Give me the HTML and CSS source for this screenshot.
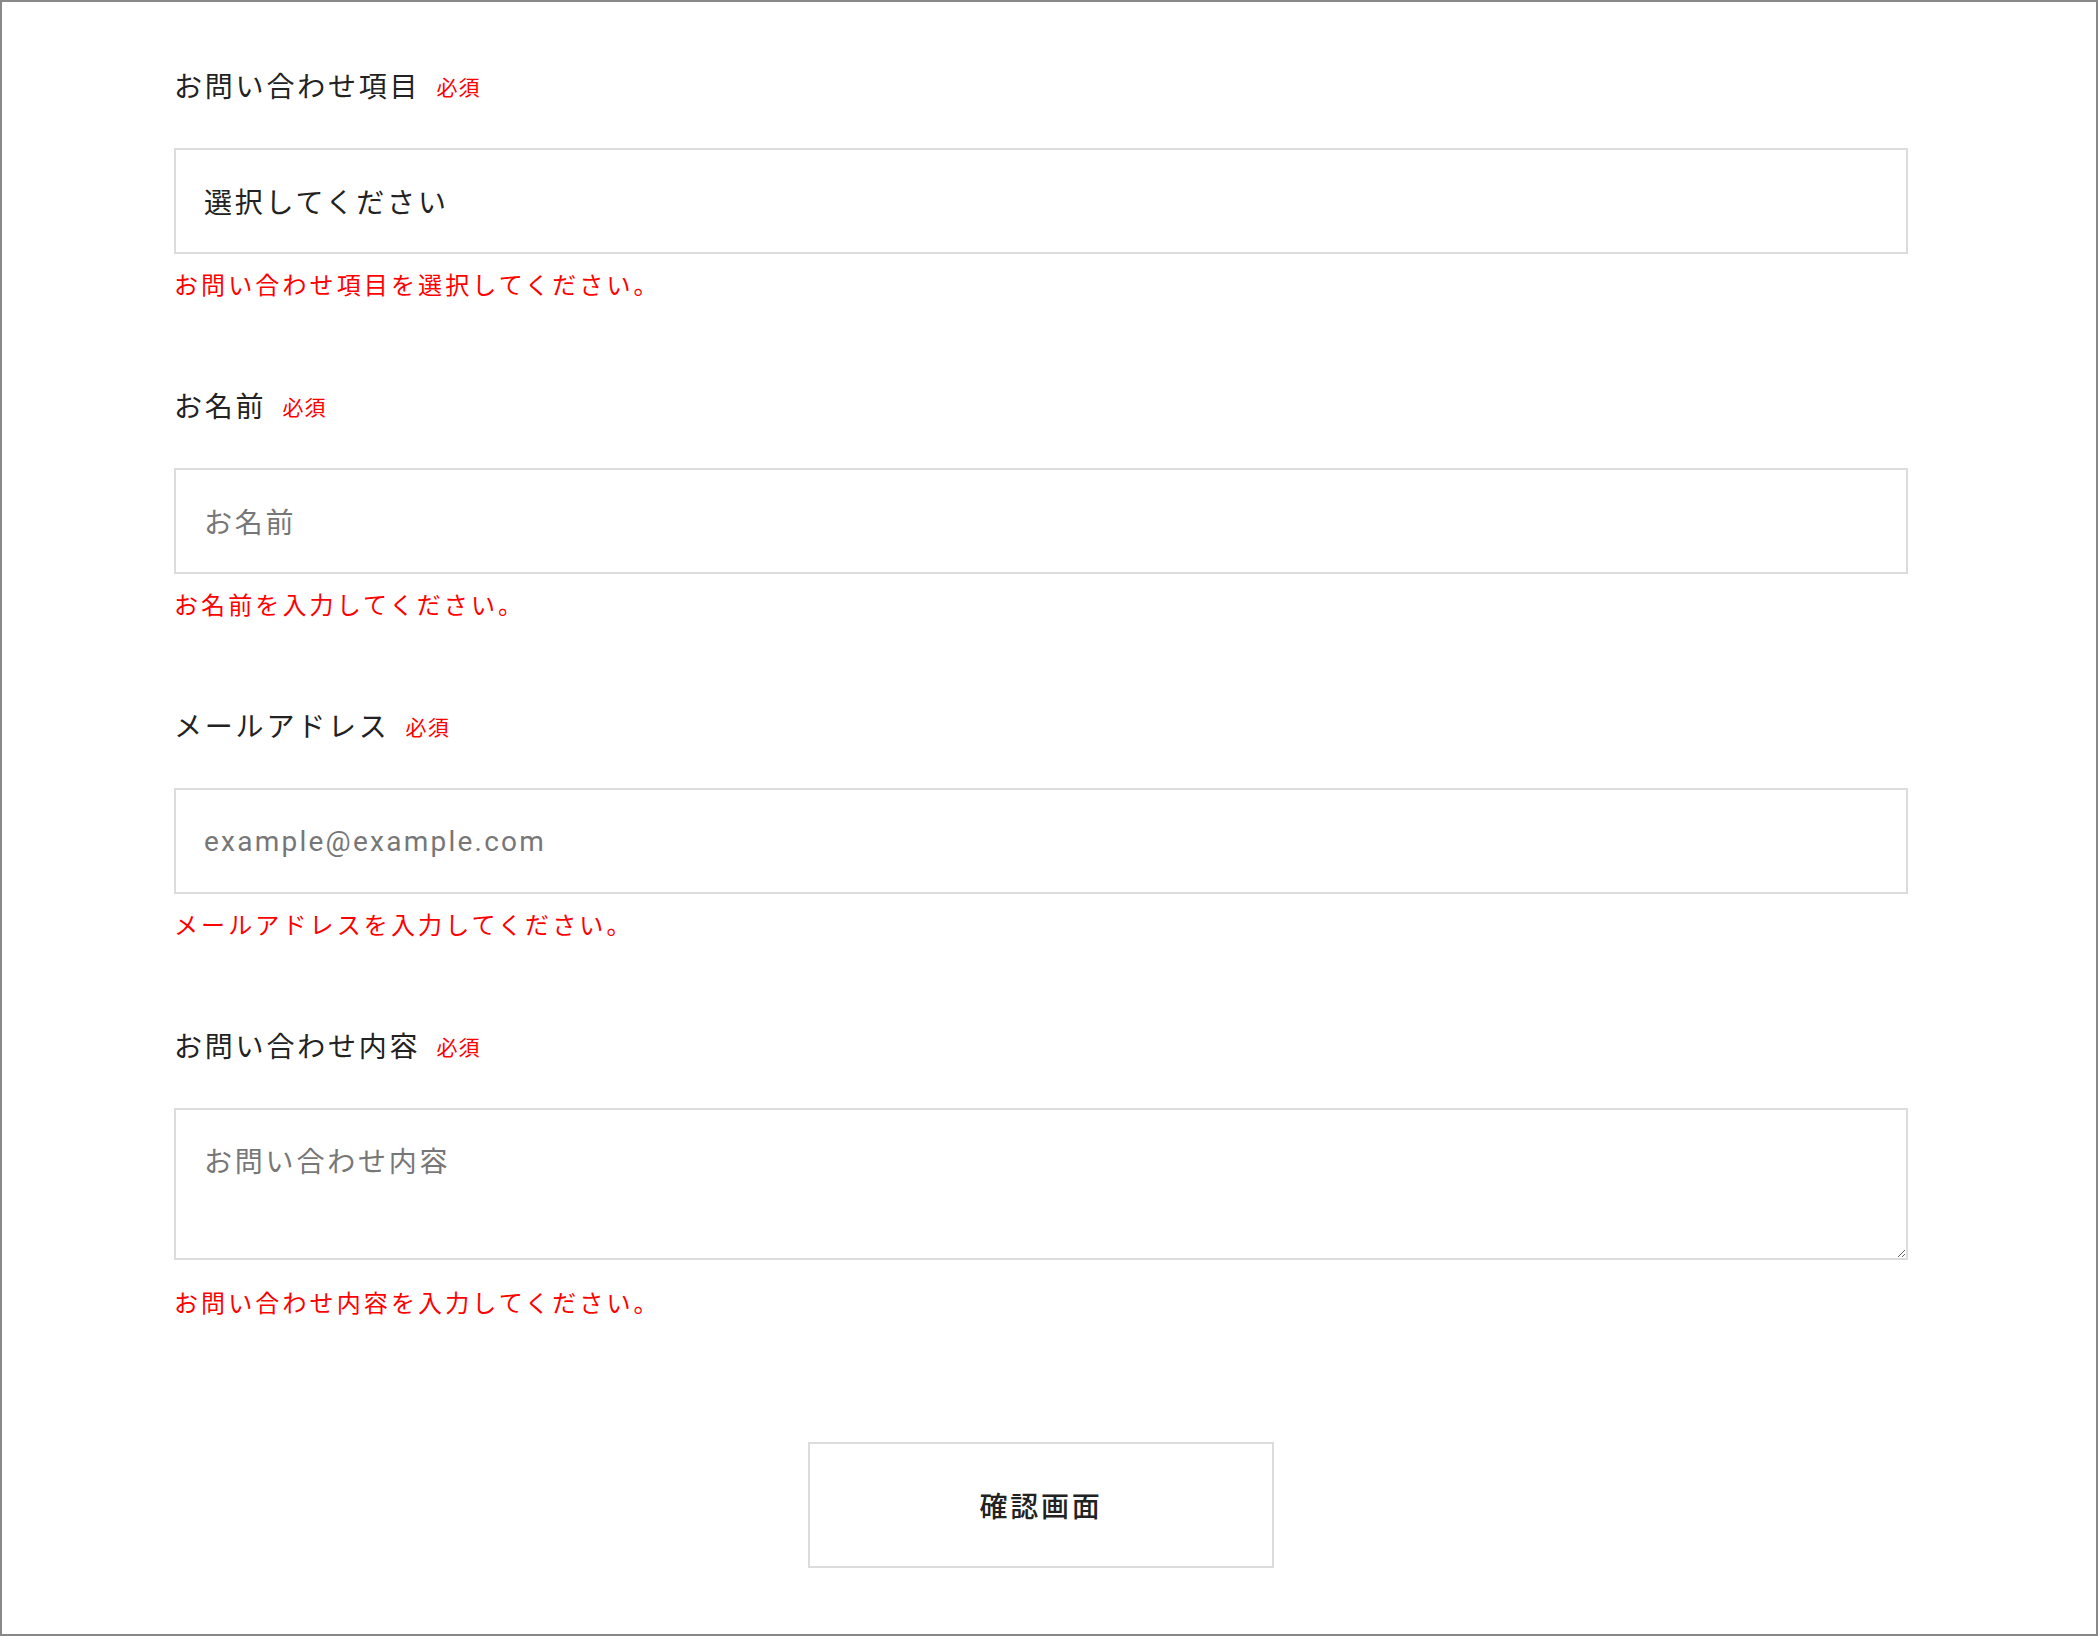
FILE: index.html
```html
<!DOCTYPE html>
<html lang="ja">
<head>
<meta charset="utf-8">
<title>お問い合わせ</title>
<link rel="stylesheet" href="styles.css">
</head>
<body>
<div class="frame">
  <form class="form">
    <div class="field">
      <label class="label">お問い合わせ項目<span class="req">必須</span></label>
      <select class="control select">
        <option>選択してください</option>
      </select>
      <p class="error">お問い合わせ項目を選択してください。</p>
    </div>
    <div class="field">
      <label class="label">お名前<span class="req">必須</span></label>
      <input class="control" type="text" placeholder="お名前">
      <p class="error">お名前を入力してください。</p>
    </div>
    <div class="field">
      <label class="label">メールアドレス<span class="req">必須</span></label>
      <input class="control email" type="email" placeholder="example@example.com">
      <p class="error">メールアドレスを入力してください。</p>
    </div>
    <div class="field">
      <label class="label">お問い合わせ内容<span class="req">必須</span></label>
      <textarea class="control textarea" placeholder="お問い合わせ内容"></textarea>
      <p class="error">お問い合わせ内容を入力してください。</p>
    </div>
    <div class="actions">
      <button type="button" class="submit">確認画面</button>
    </div>
  </form>
</div>
</body>
</html>
```

FILE: styles.css
```css
* { box-sizing: border-box; }
html, body { margin: 0; padding: 0; background: #fff; }
body {
  font-family: "Noto Sans CJK JP", "Noto Sans", sans-serif;
  color: #222;
}
.frame {
  width: 2098px;
  height: 1636px;
  border: 2px solid #888;
  padding: 63px 0 0 172px;
}
.form {
  width: 1734px;
}
.field {
  margin-bottom: 85px;
}
.label {
  display: flex;
  align-items: center;
  height: 40px;
  font-size: 28px;
  line-height: 40px;
  letter-spacing: 0.1em;
  color: #222;
  margin-bottom: 43px;
}
.req {
  font-size: 21px;
  line-height: 1;
  color: #ff0000;
  letter-spacing: 0.05em;
  margin-left: 16px;
  margin-top: 3px;
}
.control {
  display: block;
  width: 100%;
  height: 106px;
  border: 2px solid #dcdcdc;
  border-radius: 0;
  background: #fff;
  padding: 0 28px;
  font-family: "Noto Sans CJK JP", "Noto Sans", sans-serif;
  font-size: 28px;
  letter-spacing: 0.1em;
  color: #222;
  outline: none;
  margin: 0;
}
.select {
  appearance: none;
  -webkit-appearance: none;
}
.control::placeholder {
  color: #777;
  opacity: 1;
}
.email {
  font-family: Roboto, "Noto Sans CJK JP", sans-serif;
  letter-spacing: 0.08em;
}
.textarea {
  height: 152px;
  padding: 30px 28px;
  line-height: 40px;
  resize: vertical;
  margin-bottom: 26px;
}
.error {
  margin: 14px 0 0;
  font-size: 24px;
  line-height: 32px;
  letter-spacing: 0.13em;
  color: #ff0000;
}
.actions {
  display: flex;
  justify-content: center;
  margin-top: 124px;
}
.submit {
  width: 466px;
  height: 126px;
  background: #fff;
  border: 2px solid #dcdcdc;
  font-family: "Noto Sans CJK JP", "Noto Sans", sans-serif;
  font-size: 28px;
  font-weight: 500;
  letter-spacing: 0.1em;
  color: #222;
  cursor: pointer;
}
```
